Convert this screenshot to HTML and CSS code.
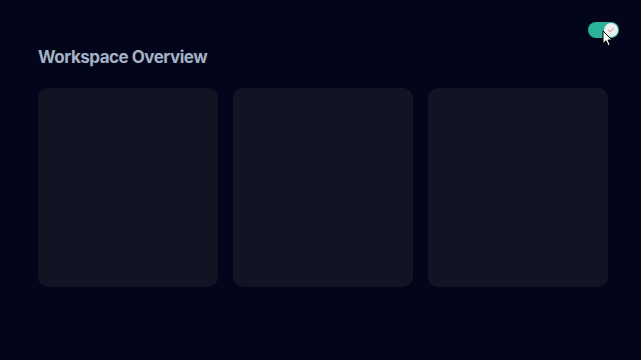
FILE: index.html
```html
<!DOCTYPE html>
<html>
<head>
<meta charset="utf-8">
<link rel="stylesheet" href="styles.css">
</head>
<body>
<div class="topbar">
  <div class="toggle">
    <div class="knob">
      <svg width="8" height="8" viewBox="0 0 8 8"><path d="M1.5 4.2 L3.2 5.8 L6.5 2.4" fill="none" stroke="#e6a7a0" stroke-width="1.2" stroke-linecap="round" stroke-linejoin="round"/></svg>
    </div>
    <svg class="cursor" width="12" height="17" viewBox="0 0 12 17"><path d="M1 1 L1 13.5 L4 10.8 L6.2 15.6 L8.2 14.7 L6 10 L10 10 Z" fill="#fff" stroke="#000" stroke-width="1" stroke-linejoin="round"/></svg>
  </div>
</div>
<main class="content">
  <h1 class="title">Workspace Overview</h1>
  <div class="cards">
    <div class="card"></div>
    <div class="card"></div>
    <div class="card"></div>
  </div>
</main>
</body>
</html>
```
FILE: styles.css
```css
html, body {
  margin: 0;
  padding: 0;
  background: #03061a;
  width: 641px;
  height: 360px;
  overflow: hidden;
  font-family: Inter, "Noto Sans", sans-serif;
}
.topbar {
  display: flex;
  justify-content: flex-end;
  padding: 22px 22px 0 0;
  height: 16px;
}
.toggle {
  position: relative;
  width: 31px;
  height: 16px;
  border-radius: 8px;
  background: #2bb39a;
  display: flex;
  align-items: center;
  justify-content: flex-end;
  padding-right: 1px;
  box-sizing: border-box;
}
.knob {
  width: 14px;
  height: 14px;
  border-radius: 50%;
  background: #eef1f1;
  display: flex;
  align-items: center;
  justify-content: center;
}
.cursor {
  position: absolute;
  left: 14px;
  top: 8px;
}
.content {
  padding: 0 33px 0 38px;
}
.title {
  margin: 8px 0 0 0;
  font-size: 17px;
  font-weight: 700;
  color: #a5b1c4;
  letter-spacing: -0.5px;
  line-height: 22px;
}
.cards {
  display: grid;
  grid-template-columns: repeat(3, 180px);
  gap: 15px;
  margin-top: 20px;
}
.card {
  height: 199px;
  border-radius: 10px;
  background: #111422;
}
```
